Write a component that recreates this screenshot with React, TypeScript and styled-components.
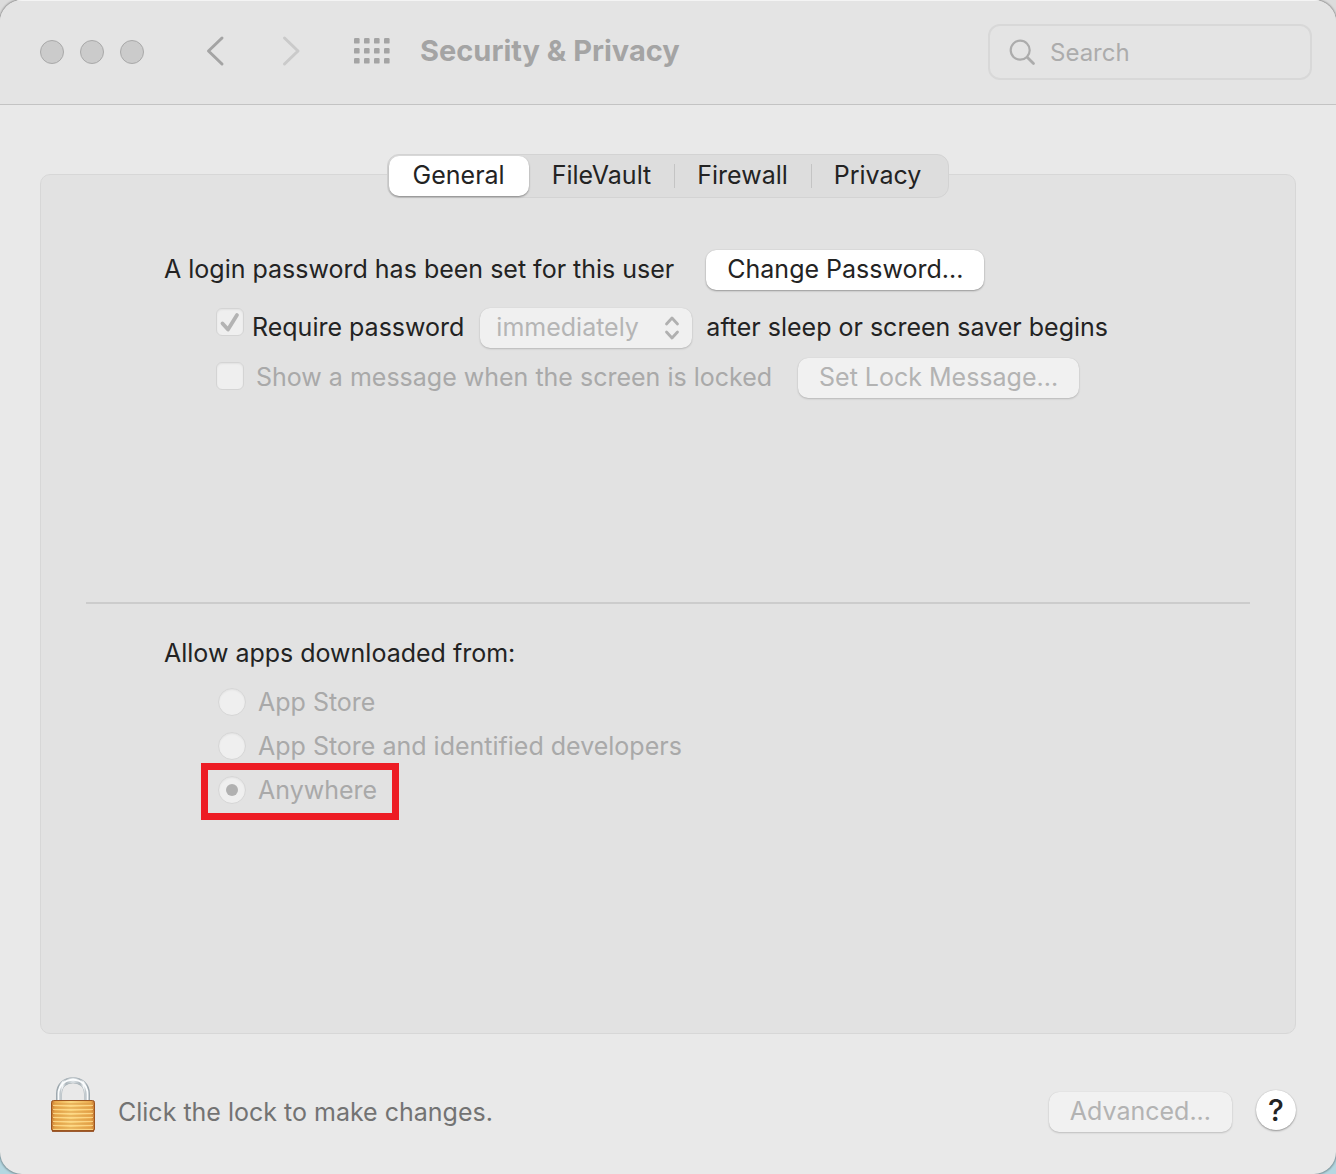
import React, { useState } from "react";
import styled, { createGlobalStyle, css } from "styled-components";

const GlobalStyle = createGlobalStyle`
  *, *::before, *::after { box-sizing: border-box; }
  body {
    margin: 0;
    background: linear-gradient(#dcdcdc 50%, #b4d7e1 50%);
    color: #232323;
    font: 400 25px/32px Inter, "Liberation Sans", sans-serif;
  }
  button, input, select { font: inherit; color: inherit; margin: 0; }
`;

const Window = styled.main`
  display: flex;
  flex-direction: column;
  min-height: 100vh;
  background: #e9e9e9;
  border-radius: 22px;
  overflow: hidden;
  box-shadow: 0 0 2px 1px rgba(0, 0, 0, 0.35);
`;

const Toolbar = styled.header`
  display: flex;
  align-items: center;
  height: 105px;
  padding: 0 24px 0 40px;
  background: #e4e4e4;
  border-bottom: 1px solid #c3c3c3;
  box-shadow: inset 0 1px #f4f4f4;
`;

const Lights = styled.div`
  display: flex;
  gap: 16px;
`;

const Light = styled.button`
  width: 24px;
  height: 24px;
  padding: 0;
  border: 1px solid #a9a9a9;
  border-radius: 50%;
  background: #cbcbcb;
`;

const Nav = styled.nav`
  display: flex;
  gap: 44px;
  margin: 0 47px 0 55px;
`;

const IconButton = styled.button<{ $color: string }>`
  display: flex;
  padding: 0 0 2px;
  border: 0;
  background: none;
  color: ${(p) => p.$color};
`;

const Title = styled.h1`
  flex: 1;
  margin: 0 0 0 30px;
  padding-bottom: 2px;
  color: #a4a4a4;
  font-size: 29px;
  font-weight: 700;
`;

const SearchBox = styled.label`
  display: flex;
  align-items: center;
  gap: 14px;
  width: 324px;
  height: 56px;
  padding: 0 18px;
  border: 2px solid #d8d8d8;
  border-radius: 12px;
  color: #acacac;
`;

const SearchInput = styled.input`
  flex: 1;
  min-width: 0;
  padding: 2px 0 0;
  border: 0;
  outline: 0;
  background: none;
  font-size: 24px;
  &::placeholder { color: #acacac; opacity: 1; }
`;

const Body = styled.div`
  display: flex;
  flex: 1;
  flex-direction: column;
  padding: 49px 40px 40px;
`;

const Tabs = styled.div`
  z-index: 1;
  display: flex;
  align-self: center;
  height: 44px;
  margin-bottom: -24px;
  padding: 1px;
  border: 1px solid #d3d3d3;
  border-radius: 12px;
  background: #dddddd;
`;

const Tab = styled.button<{ $selected: boolean; $divided: boolean }>`
  position: relative;
  padding: 0 23px 2px;
  border: 0;
  border-radius: 10px;
  background: none;
  line-height: 36px;
  &:first-child { padding-left: 24px; padding-right: 24px; }
  &:last-child { padding-right: 26px; }
  ${(p) => p.$selected && css`
    background: #ffffff;
    box-shadow: 0 1px 2px rgba(0, 0, 0, 0.4);
  `}
  ${(p) => p.$divided && css`
    &::before {
      content: "";
      position: absolute;
      top: 8px;
      bottom: 8px;
      left: 0;
      width: 1px;
      background: #c4c4c4;
    }
  `}
`;

const Panel = styled.section`
  flex: 1;
  padding: 75px 45px 40px;
  border: 1px solid #d7d7d7;
  border-radius: 10px;
  background: #e2e2e2;
`;

const Group = styled.div<{ $minHeight?: number }>`
  display: flex;
  flex-direction: column;
  min-height: ${(p) => p.$minHeight ?? 0}px;
  padding-left: 78px;
`;

const Row = styled.div<{ $indent?: boolean; $space?: number }>`
  display: flex;
  align-items: center;
  height: 40px;
  margin-bottom: ${(p) => p.$space ?? 0}px;
  padding-left: ${(p) => (p.$indent ? 52 : 0)}px;
  white-space: nowrap;
`;

const Text = styled.span<{ $gap?: number }>`
  margin-right: ${(p) => p.$gap ?? 0}px;
  padding-bottom: 2px;
`;

const FieldLabel = styled.label<{ $gap: number; $muted?: boolean }>`
  margin-right: ${(p) => p.$gap}px;
  padding-bottom: 2px;
  color: ${(p) => (p.$muted ? "#a9a9a9" : "inherit")};
`;

const PushButton = styled.button`
  height: 40px;
  padding: 0 21px 2px;
  border: 0;
  border-radius: 10px;
  background: #ffffff;
  box-shadow: 0 1px 2px rgba(0, 0, 0, 0.32), 0 0 1px rgba(0, 0, 0, 0.2);
  white-space: nowrap;
  &:disabled {
    background: #f1f1f1;
    color: #b3b3b3;
    box-shadow: 0 1px 2px rgba(0, 0, 0, 0.18), 0 0 1px rgba(0, 0, 0, 0.12);
  }
`;

const CheckWrap = styled.span<{ $gap: number; $raise: number }>`
  display: grid;
  margin: 0 ${(p) => p.$gap}px ${(p) => p.$raise}px 0;
  > * { grid-area: 1 / 1; }
  > svg { pointer-events: none; }
`;

const Check = styled.input`
  appearance: none;
  width: 28px;
  height: 28px;
  margin: 0;
  border: 1px solid #d4d4d4;
  border-radius: 6px;
  background: #efefef;
  box-shadow: inset 0 1px 2px rgba(0, 0, 0, 0.06);
`;

const SelectWrap = styled.span`
  display: grid;
  align-items: center;
  margin-right: 14px;
  > * { grid-area: 1 / 1; }
  > svg { justify-self: end; margin-right: 12px; pointer-events: none; }
`;

const Select = styled.select`
  appearance: none;
  width: 212px;
  height: 40px;
  padding: 0 48px 2px 16px;
  border: 0;
  border-radius: 10px;
  background: #f0f0f0;
  box-shadow: 0 1px 2px rgba(0, 0, 0, 0.18), 0 0 1px rgba(0, 0, 0, 0.12);
  &:disabled { color: #b5b5b5; opacity: 1; }
`;

const Divider = styled.hr`
  height: 2px;
  margin: 0 0 30px;
  border: 0;
  background: #cccccc;
`;

const Choices = styled.fieldset`
  display: flex;
  flex-direction: column;
  align-items: flex-start;
  margin: 0;
  padding: 0 0 0 78px;
  border: 0;
`;

const Legend = styled.legend`
  margin-bottom: 8px;
  padding: 0;
  line-height: 38px;
`;

const Choice = styled.label<{ $highlighted: boolean }>`
  position: relative;
  display: flex;
  align-items: center;
  gap: 12px;
  height: 44px;
  margin-left: 54px;
  color: #a9a9a9;
  ${(p) => p.$highlighted && css`
    &::after {
      content: "";
      position: absolute;
      inset: -5px -22px -8px -17px;
      border: 7px solid #ed1c24;
      pointer-events: none;
    }
  `}
`;

const Radio = styled.input`
  appearance: none;
  display: grid;
  place-items: center;
  width: 28px;
  height: 28px;
  margin: 0;
  border: 1px solid #d6d6d6;
  border-radius: 50%;
  background: #efefef;
  box-shadow: inset 0 1px 2px rgba(0, 0, 0, 0.06);
  &:checked::before {
    content: "";
    width: 12px;
    height: 12px;
    border-radius: 50%;
    background: #b1b1b1;
  }
`;

const Footer = styled.footer`
  display: flex;
  align-items: flex-end;
  padding: 0 40px 42px 50px;
  color: #737373;
`;

const FooterText = styled.span`
  flex: 1;
  margin-left: 22px;
  line-height: 40px;
`;

const HelpButton = styled.button`
  width: 40px;
  height: 40px;
  margin: 0 0 2px 24px;
  padding: 0;
  border: 0;
  border-radius: 50%;
  background: #ffffff;
  box-shadow: 0 1px 2px rgba(0, 0, 0, 0.35), 0 0 1px rgba(0, 0, 0, 0.2);
  color: #232323;
  font-size: 30px;
  font-weight: 500;
`;

const Chevron = ({ flip = false }: { flip?: boolean }) => (
  <svg width="32" height="32" viewBox="0 0 32 32" fill="none" stroke="currentColor" strokeWidth="3" strokeLinecap="round" strokeLinejoin="round">
    <path d={flip ? "M9.500 3 23 16 9.500 29" : "M23 3 9.500 16 23 29"} />
  </svg>
);

const GridIcon = () => (
  <svg width="36" height="28" viewBox="0 0 36 28" fill="currentColor">
    {[0, 10, 20].flatMap((y) =>
      [0, 10, 20, 30].map((x) => <rect key={`${x}-${y}`} x={x} y={y + 1} width="5.600" height="5.600" rx="1.200" />)
    )}
  </svg>
);

const SearchIcon = () => (
  <svg width="28" height="28" viewBox="0 0 28 28" fill="none" stroke="currentColor" strokeWidth="2.200" strokeLinecap="round">
    <circle cx="12.200" cy="12.200" r="9.500" />
    <path d="m19.200 19.200 6.300 6.300" strokeWidth="2.800" />
  </svg>
);

const CheckMark = () => (
  <svg width="28" height="28" viewBox="0 0 28 28" fill="none" stroke="#b3b3b3" strokeWidth="3.800" strokeLinecap="round" strokeLinejoin="round">
    <path d="m6.500 15.500 5.500 6L21 7" />
  </svg>
);

const Stepper = () => (
  <svg width="16" height="24" viewBox="0 0 16 24" fill="none" stroke="#b0b0b0" strokeWidth="2.800" strokeLinecap="round" strokeLinejoin="round">
    <path d="m2.500 8 5.500-6 5.500 6M2.500 16l5.500 6 5.500-6" />
  </svg>
);

const Padlock = () => (
  <svg width="46" height="58" viewBox="0 0 46 58">
    <defs>
      <linearGradient id="brass" x1="0" x2="1">
        <stop offset="0" stopColor="#b8682a" />
        <stop offset="0.080" stopColor="#e9a84b" />
        <stop offset="0.450" stopColor="#fad57c" />
        <stop offset="0.920" stopColor="#eaa94d" />
        <stop offset="1" stopColor="#b8682a" />
      </linearGradient>
      <linearGradient id="steel" x1="0" x2="1">
        <stop offset="0" stopColor="#9aa5ac" />
        <stop offset="0.120" stopColor="#f4f7f8" />
        <stop offset="0.250" stopColor="#a9b3b9" />
        <stop offset="0.500" stopColor="#dfe5e8" />
        <stop offset="0.750" stopColor="#a9b3b9" />
        <stop offset="0.880" stopColor="#f4f7f8" />
        <stop offset="1" stopColor="#9aa5ac" />
      </linearGradient>
    </defs>
    <path d="M9 28V20C9 1.500 37 1.500 37 20v8" fill="none" stroke="#a3adb3" strokeWidth="6" />
    <path d="M9 28V20C9 1.500 37 1.500 37 20v8" fill="none" stroke="url(#steel)" strokeWidth="5" />
    <path d="M8.500 27V20C8.500 1 37.500 1 37.500 20v7" fill="none" stroke="#fbfdfe" strokeWidth="2" />
    <rect x="1.500" y="26.500" width="43" height="30.500" rx="2" fill="url(#brass)" stroke="#9c5621" />
    {[30, 34, 38, 42, 46, 50, 54].map((y) => (
      <g key={y}>
        <path d={`M2 ${y}h42`} stroke="#d9953f" strokeWidth="1.200" />
        <path d={`M3 ${y + 1.4}h40`} stroke="#fdd98a" strokeWidth="1" />
      </g>
    ))}
    <path d="M2 57h42" stroke="#8f4515" strokeWidth="1.500" />
  </svg>
);

const TABS = ["General", "FileVault", "Firewall", "Privacy"];
const SOURCES = ["App Store", "App Store and identified developers", "Anywhere"];

export default function App() {
  const [tab, setTab] = useState(0);
  return (
    <>
      <GlobalStyle />
      <Window>
        <Toolbar>
          <Lights>
            <Light aria-label="Close" />
            <Light aria-label="Minimize" />
            <Light aria-label="Zoom" />
          </Lights>
          <Nav>
            <IconButton $color="#a4a4a4" aria-label="Back"><Chevron /></IconButton>
            <IconButton $color="#cacaca" aria-label="Forward" disabled><Chevron flip /></IconButton>
          </Nav>
          <IconButton $color="#a4a4a4" aria-label="Show all"><GridIcon /></IconButton>
          <Title>Security &amp; Privacy</Title>
          <SearchBox>
            <SearchIcon />
            <SearchInput type="text" placeholder="Search" aria-label="Search" />
          </SearchBox>
        </Toolbar>

        <Body>
          <Tabs role="tablist">
            {TABS.map((name, i) => (
              <Tab
                key={name}
                role="tab"
                aria-selected={tab === i}
                $selected={tab === i}
                $divided={i > 0 && tab !== i && tab !== i - 1}
                onClick={() => setTab(i)}
              >
                {name}
              </Tab>
            ))}
          </Tabs>
          <Panel>
            <Group $minHeight={352}>
              <Row $space={18}>
                <Text $gap={32}>A login password has been set for this user</Text>
                <PushButton>Change Password...</PushButton>
              </Row>
              <Row $indent $space={10}>
                <CheckWrap $gap={8} $raise={12}>
                  <Check id="require" type="checkbox" defaultChecked disabled />
                  <CheckMark />
                </CheckWrap>
                <FieldLabel htmlFor="require" $gap={16}>Require password</FieldLabel>
                <SelectWrap>
                  <Select disabled aria-label="Password delay">
                    <option>immediately</option>
                  </Select>
                  <Stepper />
                </SelectWrap>
                <Text>after sleep or screen saver begins</Text>
              </Row>
              <Row $indent>
                <CheckWrap $gap={12} $raise={4}>
                  <Check id="message" type="checkbox" disabled />
                </CheckWrap>
                <FieldLabel htmlFor="message" $gap={26} $muted>Show a message when the screen is locked</FieldLabel>
                <PushButton disabled>Set Lock Message...</PushButton>
              </Row>
            </Group>
            <Divider />
            <Choices>
              <Legend>Allow apps downloaded from:</Legend>
              {SOURCES.map((source) => (
                <Choice key={source} $highlighted={source === "Anywhere"}>
                  <Radio type="radio" name="source" defaultChecked={source === "Anywhere"} disabled />
                  {source}
                </Choice>
              ))}
            </Choices>
          </Panel>
        </Body>

        <Footer>
          <Padlock />
          <FooterText>Click the lock to make changes.</FooterText>
          <PushButton disabled>Advanced...</PushButton>
          <HelpButton aria-label="Help">?</HelpButton>
        </Footer>
      </Window>
    </>
  );
}
